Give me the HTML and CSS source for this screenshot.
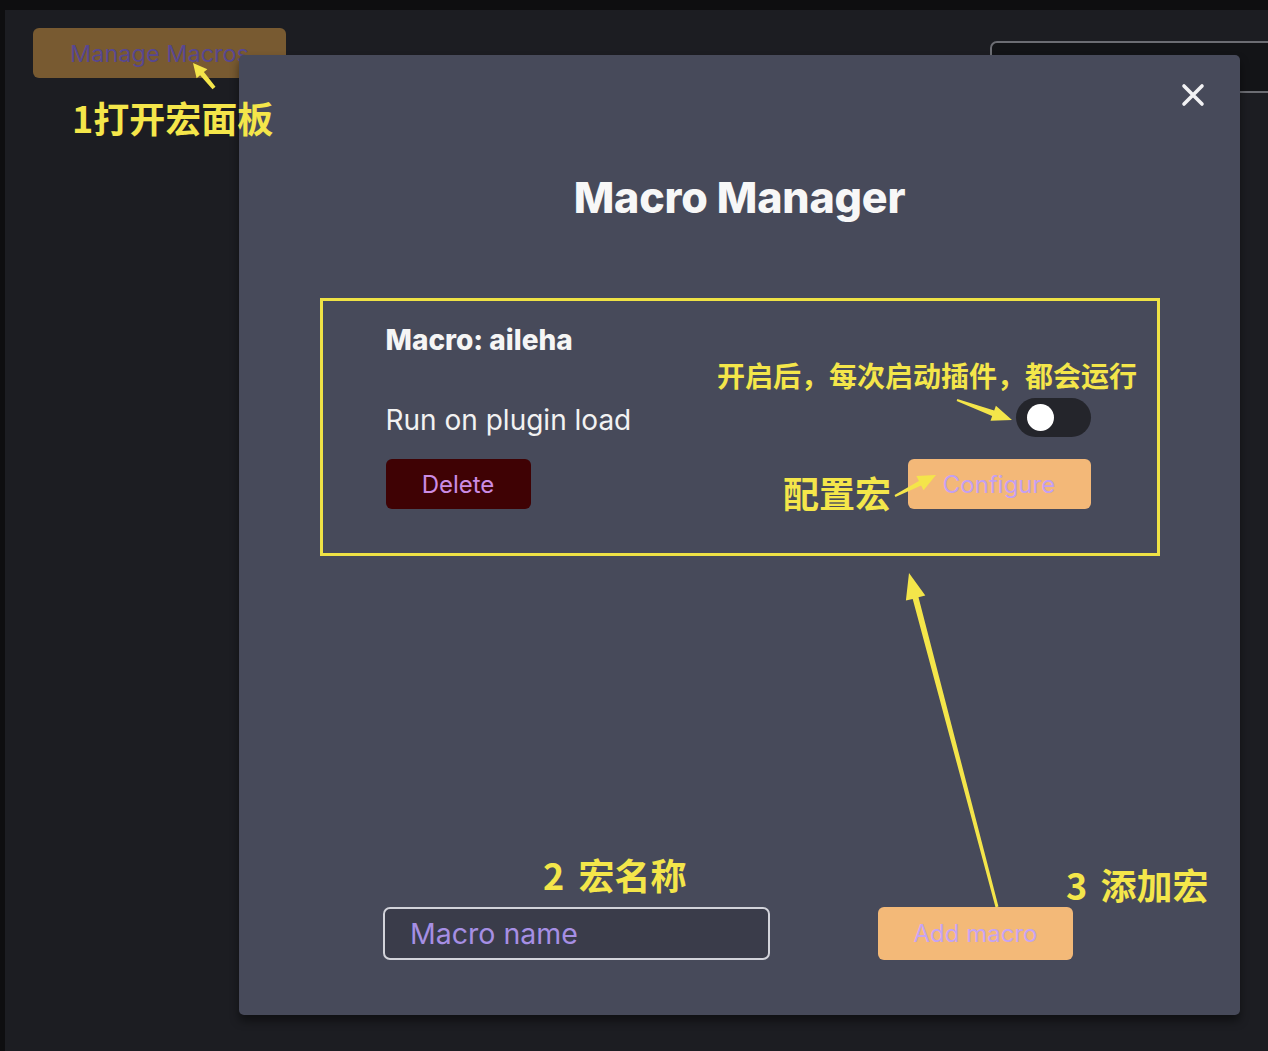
FILE: index.html
```html
<!DOCTYPE html>
<html lang="zh-CN">
<head>
<meta charset="utf-8">
<title>Macro Manager</title>
<link rel="stylesheet" href="styles.css">
</head>
<body>
<div class="app">
  <header class="topbar">
    <button class="manage-btn">Manage Macros</button>
    <div class="side-panel"></div>
  </header>
</div>

<div class="overlay">
  <div class="modal">
    <div class="modal-head">
      <button class="close-btn" aria-label="Close">
        <svg width="24" height="24" viewBox="0 0 24 24"><path d="M3 3 L21 21 M21 3 L3 21" stroke="#f2f2f4" stroke-width="3.6" stroke-linecap="round"/></svg>
      </button>
    </div>
    <h2 class="modal-title">Macro Manager</h2>
    <div class="macro-item">
      <div class="macro-name">Macro: aileha</div>
      <div class="macro-row row-toggle">
        <span class="macro-label">Run on plugin load</span>
        <span class="toggle"><span class="knob"></span></span>
      </div>
      <div class="macro-row row-actions">
        <button class="btn-delete">Delete</button>
        <button class="btn-config">Configure</button>
      </div>
    </div>
    <div class="modal-foot">
      <input class="name-input" type="text" placeholder="Macro name">
      <button class="btn-add">Add macro</button>
    </div>
  </div>
</div>

<div class="annotations">
  <svg class="arrows" width="1268" height="1051" viewBox="0 0 1268 1051">
    <polygon points="215.5,86.7 203.9,72.1 207.4,69.2 193,63 196.6,78.2 200.1,75.3 212.5,89.3"/>
    <polygon points="956.66,400.94 992.17,416.0 990.5,420.7 1012,420 995.9,405.7 994.2,410.4 957.34,399.06"/>
    <polygon points="895.46,496.89 921.1,485.4 923.6,490.3 936,475 916.4,476.1 918.9,481.0 894.54,495.11"/>
    <polygon points="998.45,906.6 918.5,597.3 925.3,595.6 909,573 905.9,600.6 912.7,598.9 995.55,907.4"/>
  </svg>
  <span class="note note-1">1打开宏面板</span>
  <span class="note note-toggle">开启后，每次启动插件，都会运行</span>
  <span class="note note-config">配置宏</span>
  <span class="note note-2">2 宏名称</span>
  <span class="note note-3">3 添加宏</span>
</div>
</body>
</html>
```

FILE: styles.css
```css
* { box-sizing: border-box; }

html, body {
  margin: 0;
  padding: 0;
  width: 1268px;
  height: 1051px;
  overflow: hidden;
}

body {
  background: #0e0e10;
  font-family: Inter, "Noto Sans", "Liberation Sans", sans-serif;
  position: relative;
}

.app {
  margin: 10px 0 0 5px;
  height: 1041px;
  background: #1c1d22;
}

.topbar {
  display: flex;
  justify-content: space-between;
  align-items: flex-start;
  padding: 18px 0 0 28px;
}

.manage-btn {
  width: 253px;
  height: 50px;
  border: none;
  border-radius: 6px;
  background: #785a31;
  color: #574790;
  font-family: Inter, sans-serif;
  font-size: 23.5px;
  text-align: left;
  padding-left: 37px;
  white-space: nowrap;
}

.side-panel {
  margin-top: 13px;
  margin-right: -14px;
  width: 292px;
  height: 52px;
  border: 2px solid #6c6d73;
  border-radius: 7px;
  background: #131417;
}

/* modal */
.overlay {
  position: absolute;
  inset: 0;
  padding: 55px 0 0 239px;
}

.modal {
  width: 1001px;
  height: 960px;
  background: #474a5a;
  border-radius: 5px;
  box-shadow: 0 6px 10px rgba(0, 0, 0, 0.45);
  display: flex;
  flex-direction: column;
}

.modal-head {
  display: flex;
  justify-content: flex-end;
  padding: 28px 35px 0 0;
}

.close-btn {
  width: 24px;
  height: 24px;
  padding: 0;
  border: none;
  background: none;
  display: block;
}
.close-btn svg { display: block; }

.modal-title {
  margin: 65px 0 0;
  text-align: center;
  font-size: 43px;
  line-height: 50px;
  font-weight: 800;
  color: #f7f7f7;
  letter-spacing: -0.2px;
}

.macro-item {
  margin: 76px auto 0;
  width: 840px;
  height: 258px;
  border: 3px solid #efe245;
  padding: 23px 66px 0 63px;
}

.macro-name {
  font-size: 28px;
  line-height: 32px;
  font-weight: 800;
  color: #f5f5f5;
}

.macro-row {
  display: flex;
  justify-content: space-between;
  align-items: center;
}

.row-toggle { margin-top: 42px; height: 39px; }
.row-actions { margin-top: 22px; height: 50px; }

.macro-label {
  font-size: 28px;
  color: #f2f2f2;
  position: relative;
  top: 2px;
}

.toggle {
  width: 75px;
  height: 39px;
  border-radius: 20px;
  background: #24252b;
  display: flex;
  align-items: center;
  padding-left: 11px;
}
.knob {
  width: 27px;
  height: 27px;
  border-radius: 50%;
  background: #ffffff;
}

.btn-delete,
.btn-config,
.btn-add {
  border: none;
  border-radius: 6px;
  font-family: Inter, sans-serif;
}

.btn-delete {
  width: 145px;
  height: 50px;
  background: #3f0204;
  color: #cc8ce4;
  font-size: 24px;
}

.btn-config {
  width: 183px;
  height: 50px;
  background: #f3b878;
  color: #c4a0f0;
  font-size: 24px;
}

.modal-foot {
  margin-top: auto;
  display: flex;
  align-items: center;
  gap: 108px;
  padding: 0 0 55px 144px;
}

.name-input {
  width: 387px;
  height: 53px;
  border: 2px solid #d2d3da;
  border-radius: 7px;
  background: #3a3c4a;
  padding: 0 0 0 25px;
  font-family: Inter, sans-serif;
  font-size: 28.5px;
  color: #e8e8f0;
  outline: none;
}
.name-input::placeholder { color: #a68fe4; opacity: 1; }

.btn-add {
  width: 195px;
  height: 53px;
  background: #f3b978;
  color: #c6a4f2;
  font-size: 24px;
}

/* annotation layer */
.annotations {
  position: absolute;
  inset: 0;
  pointer-events: none;
}

.arrows {
  position: absolute;
  left: 0;
  top: 0;
}
.arrows polygon { fill: #f4e54a; }

.note {
  position: absolute;
  color: #f4e64a;
  font-family: "Noto Sans CJK SC", "Noto Sans", sans-serif;
  font-weight: 700;
  line-height: 1;
  white-space: nowrap;
}

.note-1 { left: 72px; top: 99px; font-size: 36px; }
.note-toggle { left: 717px; top: 361px; font-size: 28px; }
.note-config { left: 783px; top: 474px; font-size: 36px; }
.note-2 { left: 543px; top: 856px; font-size: 36px; word-spacing: 6px; }
.note-3 { left: 1066px; top: 866px; font-size: 36px; word-spacing: 5px; }
```
